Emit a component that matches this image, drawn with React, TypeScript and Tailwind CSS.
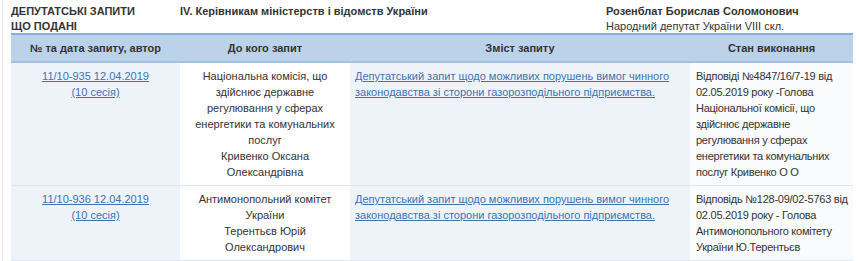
const rows = [
  {
    num: '11/10-935 12.04.2019',
    session: '(10 сесія)',
    to: ['Національна комісія, що здійснює державне регулювання у сферах енергетики та комунальних послуг', 'Кривенко Оксана Олександрівна'],
    subject: 'Депутатський запит щодо можливих порушень вимог чинного законодавства зі сторони газорозподільного підприємства.',
    status: 'Відповіді №4847/16/7-19 від 02.05.2019 року -Голова Національної комісії, що здійснює державне регулювання у сферах енергетики та комунальних послуг Кривенко О О',
  },
  {
    num: '11/10-936 12.04.2019',
    session: '(10 сесія)',
    to: ['Антимонопольний комітет України', 'Терентьєв Юрій Олександрович'],
    subject: 'Депутатський запит щодо можливих порушень вимог чинного законодавства зі сторони газорозподільного підприємства.',
    status: 'Відповідь №128-09/02-5763 від 02.05.2019 року - Голова Антимонопольного комітету України Ю.Терентьєв',
  },
];

export default function App() {
  return (
    <div className="h-[261px] w-[859px] overflow-hidden bg-white font-['Liberation_Sans',Arial,sans-serif] text-[11px] leading-[16px] text-[#333]">
      <div className="ml-[2px] h-full border-l border-[#e4e4e4] pl-[8px] pr-[6px]">
        {/* Heading */}
        <div className="flex pt-[4px] leading-[15px]">
          <div className="w-[169px] shrink-0 font-bold">
            ДЕПУТАТСЬКІ ЗАПИТИ
            <br />
            ЩО ПОДАНІ
          </div>
          <div className="w-[426px] shrink-0 font-bold">IV. Керівникам міністерств і відомств України</div>
          <div className="shrink-0">
            <div className="font-bold">Розенблат Борислав Соломонович</div>
            <div>Народний депутат України VIII скл.</div>
          </div>
        </div>

        {/* Table */}
        <table className="mt-[-1px] w-[842px] table-fixed border-collapse">
          <colgroup>
            <col className="w-[169px]" />
            <col className="w-[170px]" />
            <col className="w-[340px]" />
            <col className="w-[163px]" />
          </colgroup>
          <thead>
            <tr className="h-[28px] border-t-2 border-b-2 border-t-[#8aafd8] border-b-[#a3c1e2] bg-[#bcd2ea]">
              <th className="font-bold">№ та дата запиту, автор</th>
              <th className="font-bold">До кого запит</th>
              <th className="font-bold">Зміст запиту</th>
              <th className="font-bold">Стан виконання</th>
            </tr>
          </thead>
          <tbody>
            {rows.map((r, i) => (
              <tr key={i} className="border-b border-[#dde6f1] align-top">
                <td className="bg-[#eef3f9] px-[5px] py-[5px] text-center">
                  <a href="#" className="text-[#3b74b3] underline">
                    {r.num}
                  </a>
                  <br />
                  <a href="#" className="text-[#3b74b3] underline">
                    {r.session}
                  </a>
                </td>
                <td className="bg-white px-[6px] py-[5px] text-center">
                  {r.to.map((t, j) => (
                    <div key={j}>{t}</div>
                  ))}
                </td>
                <td className="bg-[#eef3f9] px-[5px] py-[5px]">
                  <a href="#" className="text-[#3b74b3] underline">
                    {r.subject}
                  </a>
                </td>
                <td className="bg-[#fafbfc] pl-[6px] pr-0 py-[5px] tracking-[-0.25px]">{r.status}</td>
              </tr>
            ))}
          </tbody>
        </table>
      </div>
    </div>
  );
}
